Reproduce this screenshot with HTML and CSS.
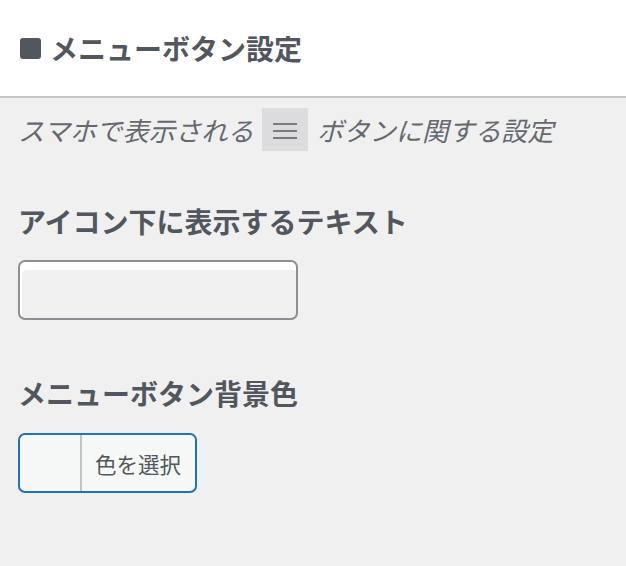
FILE: index.html
```html
<!DOCTYPE html>
<html>

<head>
  <meta charset="UTF-8">
  <title>メニューボタン設定</title>
  <link rel="stylesheet" href="styles.css">
</head>

<body>
  <div class="section-title">
    <span class="mark"></span>
    <h2>メニューボタン設定</h2>
  </div>

  <div class="panel">
    <p class="desc">
      <span>スマホで表示される</span>
      <span class="menu-icon">
        <svg width="26" height="20" viewBox="0 0 26 20">
          <rect x="1" y="3" width="24" height="2" fill="#787c82" />
          <rect x="1" y="10" width="24" height="2" fill="#787c82" />
          <rect x="1" y="17" width="24" height="2" fill="#787c82" />
        </svg>
      </span>
      <span>ボタンに関する設定</span>
    </p>

    <div class="field">
      <label class="field-label">アイコン下に表示するテキスト</label>
      <input class="text-input" type="text">
    </div>

    <div class="field">
      <label class="field-label">メニューボタン背景色</label>
      <button class="color-btn">
        <span class="swatch"></span>
        <span class="color-text">色を選択</span>
      </button>
    </div>
  </div>
</body>

</html>
```

FILE: styles.css
```css
body {
  margin: 0;
  background: #f0f0f0;
  font-family: "Noto Sans CJK JP", "Noto Sans", sans-serif;
  color: #50575e;
}

.section-title {
  height: 96px;
  background: #fff;
  border-bottom: 2px solid #c4c6ca;
  display: flex;
  align-items: center;
  padding: 0 20px;
}

.mark {
  width: 21px;
  height: 21px;
  border-radius: 3px;
  background: #50575e;
  margin-right: 9px;
  margin-top: 1px;
}

.section-title h2 {
  margin: 0;
  font-size: 28px;
  font-weight: bold;
  line-height: 40px;
}

.panel {
  padding: 0 18px;
}

.desc {
  margin: 10px 0 0;
  display: flex;
  align-items: center;
  font-size: 26.3px;
  font-style: italic;
  color: #646970;
  height: 43px;
}

.menu-icon {
  width: 46px;
  height: 43px;
  background: #dcdcde;
  display: flex;
  align-items: center;
  justify-content: center;
  margin: 0 9px 0 8px;
}

.field {
  margin-top: 50px;
}

.field + .field {
  margin-top: 53px;
}

.field-label {
  display: block;
  font-size: 28px;
  font-weight: bold;
  line-height: 40px;
  margin-bottom: 19px;
}

.field + .field .field-label {
  margin-bottom: 20px;
}

.text-input {
  display: block;
  box-sizing: border-box;
  width: 280px;
  height: 60px;
  margin: 0;
  border: 2px solid #8c8f94;
  border-radius: 7px;
  background: #f0f0f0;
  box-shadow: inset 2px 8px 0 #fff;
}

.color-btn {
  display: flex;
  box-sizing: border-box;
  height: 60px;
  margin: 0;
  padding: 0;
  border: 2px solid #2271b1;
  border-radius: 7px;
  background: #f6f7f7;
  overflow: hidden;
  font-family: inherit;
  color: #50575e;
}

.swatch {
  width: 60px;
  height: 100%;
  border-right: 2px solid #c3c4c7;
}

.color-text {
  display: flex;
  align-items: center;
  height: 100%;
  padding: 0 14px 0 13px;
  font-size: 21.5px;
}
```
